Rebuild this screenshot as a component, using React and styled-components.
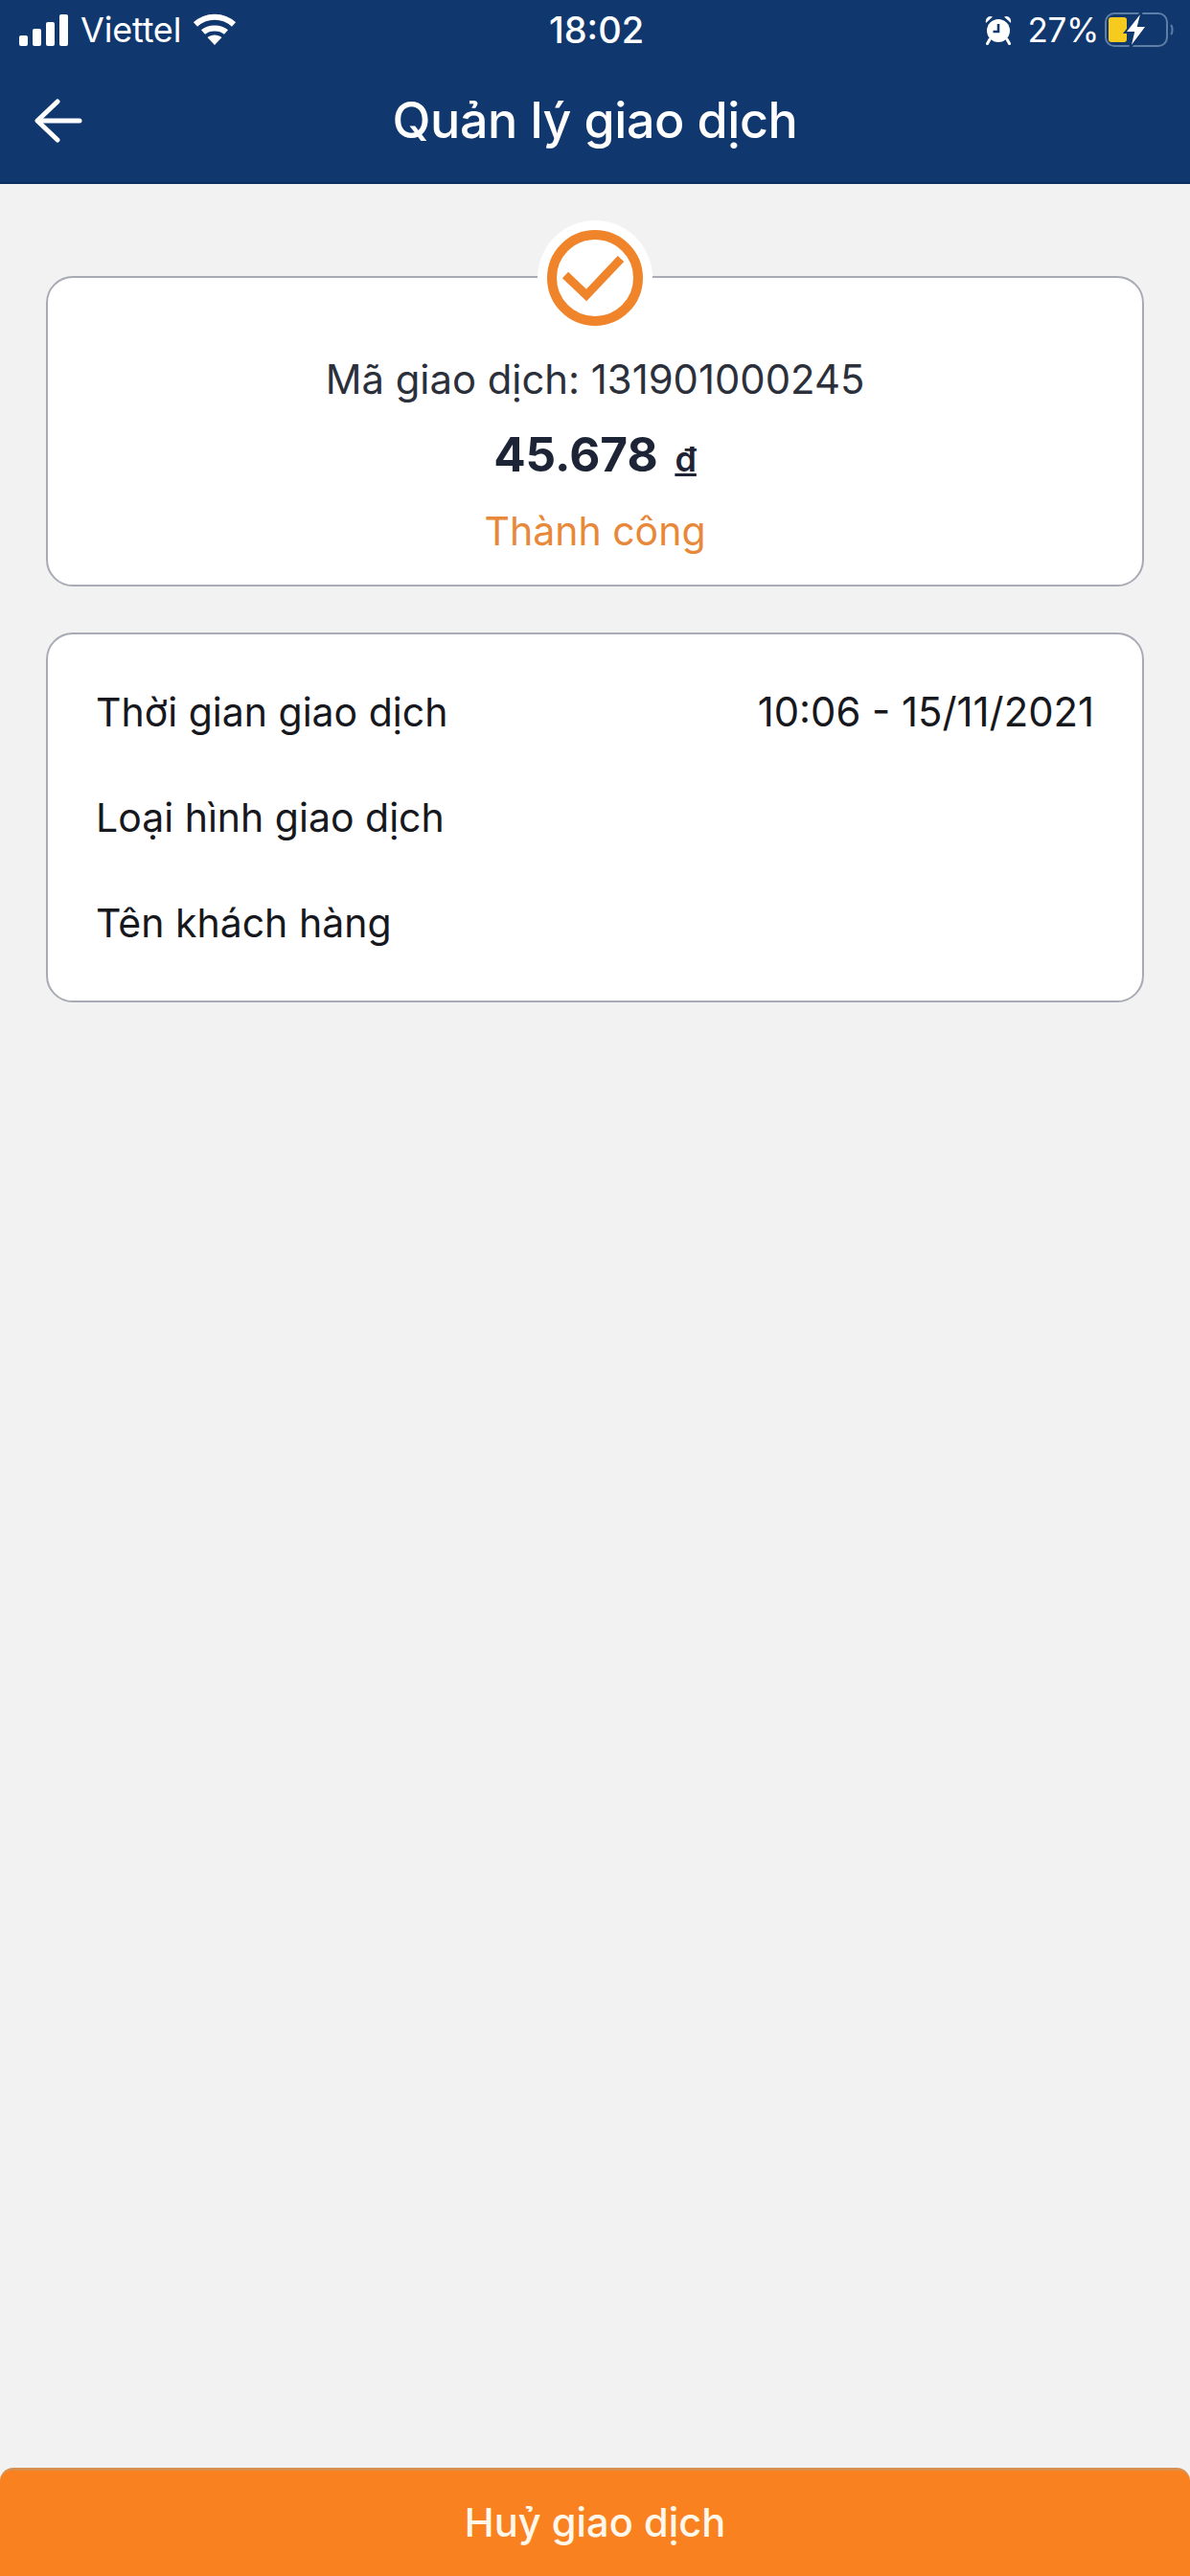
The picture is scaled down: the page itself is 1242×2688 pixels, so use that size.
import React from 'react';
import styled, { createGlobalStyle } from 'styled-components';

const GlobalStyle = createGlobalStyle`
    html, body {
        margin: 0;
        padding: 0;
        background: #f2f2f3;
    }
    * {
        box-sizing: border-box;
    }
`

const Screen = styled.div`
    width: 1242px;
    height: 2688px;
    display: flex;
    flex-direction: column;
    overflow: hidden;
    background: #f2f2f3;
    font-family: Inter, "Liberation Sans", sans-serif;
`
const TopBar = styled.header`
    height: 192px;
    flex-shrink: 0;
    background: #10386f;
    border-bottom: 2px solid #0c2f60;
    color: #fff;
`
const StatusBar = styled.div`
    height: 62px;
    padding: 0 17px 0 20px;
    display: grid;
    grid-template-columns: 1fr auto 1fr;
    align-items: center;
`
const StatusLeft = styled.div`
    display: flex;
    align-items: center;
    gap: 12px;
    font-size: 36px;
    letter-spacing: -0.2px;
`
const StatusRight = styled.div`
    display: flex;
    align-items: center;
    justify-content: flex-end;
    gap: 6px;
    font-size: 35px;
    letter-spacing: -0.3px;
`
const Battery = styled.span`
    margin-left: 10px;
`
const Clock = styled.span`
    font-weight: 500;
    font-size: 38px;
`
const NavRow = styled.div`
    height: 128px;
    padding: 0 36px;
    display: grid;
    grid-template-columns: 90px 1fr 90px;
    align-items: center;
`
const Title = styled.h1`
    margin: 0 0 2px;
    text-align: center;
    font-size: 52px;
    font-weight: 500;
    letter-spacing: -0.4px;
    white-space: nowrap;
`
const Content = styled.main`
    flex: 1;
    padding: 96px 48px 0;
    display: flex;
    flex-direction: column;
    gap: 48px;
`
const Card = styled.section`
    position: relative;
    background: #fff;
    border: 2px solid #a9abb4;
    border-radius: 28px;
`
const SummaryCard = styled(Card)`
    height: 324px;
    padding-top: 82px;
    display: flex;
    flex-direction: column;
    align-items: center;
`
const Badge = styled.div`
    position: absolute;
    top: -60px;
    left: 50%;
    transform: translateX(-50%);
    width: 120px;
    height: 120px;
    border-radius: 50%;
    background: #fff;
    display: flex;
    align-items: center;
    justify-content: center;
`
const Code = styled.div`
    height: 48px;
    line-height: 48px;
    font-size: 41.8px;
    color: #2b303b;
`
const Amount = styled.div`
    height: 62px;
    margin-top: 23px;
    line-height: 62px;
    font-size: 49.5px;
    font-weight: 700;
    color: #1c2436;
`
const Currency = styled.span`
    margin-left: 6px;
    font-size: 36px;
    font-weight: 600;
    text-decoration: underline;
`
const Status = styled.div`
    height: 48px;
    margin-top: 25px;
    line-height: 48px;
    font-size: 41px;
    color: #e8883a;
`
const DetailCard = styled(Card)`
    height: 386px;
    padding: 26px 50px 0;
`
const Row = styled.div`
    height: 110px;
    display: flex;
    align-items: center;
    justify-content: space-between;
    font-size: 41px;
    color: #16181d;
`
const Value = styled.span`
    font-size: 41.8px;
`
const CancelButton = styled.button`
    flex-shrink: 0;
    width: 100%;
    height: 113px;
    padding: 0 0 2px;
    border: 0;
    border-top: 3px solid #d9904e;
    border-radius: 14px 14px 0 0;
    background: #f9811f;
    color: #fff8ea;
    font-family: inherit;
    font-size: 41.6px;
    font-weight: 500;
`

const SignalIcon = () => (
    <svg width="52" height="33" viewBox="0 0 52 33">
        <rect x="0" y="22" width="9" height="11" rx="2" fill="#fff" />
        <rect x="14" y="15" width="9" height="18" rx="2" fill="#fff" />
        <rect x="28" y="8" width="9" height="25" rx="2" fill="#fff" />
        <rect x="42" y="0" width="9" height="33" rx="2" fill="#fff" />
    </svg>
)

const WifiIcon = () => (
    <svg width="46" height="34" viewBox="0 0 46 34" fill="none" stroke="#fff" strokeWidth="6">
        <path d="M3 11.5 C14 1 32 1 43 11.5" />
        <path d="M11 19.5 C17 14 29 14 35 19.5" />
        <path d="M23 33 L15.5 25 C19.5 21.5 26.5 21.5 30.5 25 Z" fill="#fff" stroke="none" />
    </svg>
)

const AlarmIcon = () => (
    <svg width="28" height="32" viewBox="0 0 28 32">
        <path d="M1 9 L8 2.5 C4 0.5 0 4 1 9 Z M27 9 L20 2.5 C24 0.5 28 4 27 9 Z" fill="#fff" />
        <path d="M5 26 L2.5 30.5 M23 26 L25.5 30.5" stroke="#fff" strokeWidth="3" strokeLinecap="round" />
        <circle cx="14" cy="17" r="12" fill="#fff" />
        <path d="M14 10 V18 H8.5" fill="none" stroke="#10386f" strokeWidth="2.6" />
    </svg>
)

const BatteryIcon = () => (
    <svg width="72" height="42" viewBox="0 0 72 42">
        <rect x="1" y="4" width="64" height="34" rx="9" fill="none" stroke="#5f7ea6" strokeWidth="2" />
        <path d="M69 16 C71 17.5 71 24.5 69 26" fill="none" stroke="#5f7ea6" strokeWidth="2" />
        <rect x="4" y="8" width="19" height="26" rx="3" fill="#f6cb1d" />
        <path d="M39 1 L21 24 H30 L26 41 L44 17 H35 Z" fill="#fff" stroke="#10386f" strokeWidth="2" />
    </svg>
)

const BackIcon = () => (
    <svg width="50" height="46" viewBox="0 0 50 46" fill="none" stroke="#fff" strokeWidth="5" strokeLinecap="round" strokeLinejoin="round">
        <path d="M47 23 H4" />
        <path d="M24 3 L3 23 L24 43" />
    </svg>
)

const CheckBadge = () => (
    <svg width="102" height="102" viewBox="0 0 102 102" fill="none" stroke="#f0842a" strokeWidth="10">
        <circle cx="51" cy="51" r="45" />
        <path d="M20 48 L42 69 L78 31" strokeWidth="9" strokeLinejoin="miter" />
    </svg>
)

export default function App() {
    return (
        <Screen>
            <GlobalStyle />
            <TopBar>
                <StatusBar>
                    <StatusLeft>
                        <SignalIcon />
                        <span>Viettel</span>
                        <WifiIcon />
                    </StatusLeft>
                    <Clock>18:02</Clock>
                    <StatusRight>
                        <AlarmIcon />
                        <Battery>27%</Battery>
                        <BatteryIcon />
                    </StatusRight>
                </StatusBar>
                <NavRow>
                    <BackIcon />
                    <Title>Quản lý giao dịch</Title>
                </NavRow>
            </TopBar>
            <Content>
                <SummaryCard>
                    <Badge>
                        <CheckBadge />
                    </Badge>
                    <Code>Mã giao dịch: 131901000245</Code>
                    <Amount>45.678 <Currency>đ</Currency></Amount>
                    <Status>Thành công</Status>
                </SummaryCard>
                <DetailCard>
                    <Row>
                        <span>Thời gian giao dịch</span>
                        <Value>10:06 - 15/11/2021</Value>
                    </Row>
                    <Row>
                        <span>Loại hình giao dịch</span>
                    </Row>
                    <Row>
                        <span>Tên khách hàng</span>
                    </Row>
                </DetailCard>
            </Content>
            <CancelButton>Huỷ giao dịch</CancelButton>
        </Screen>
    )
}
